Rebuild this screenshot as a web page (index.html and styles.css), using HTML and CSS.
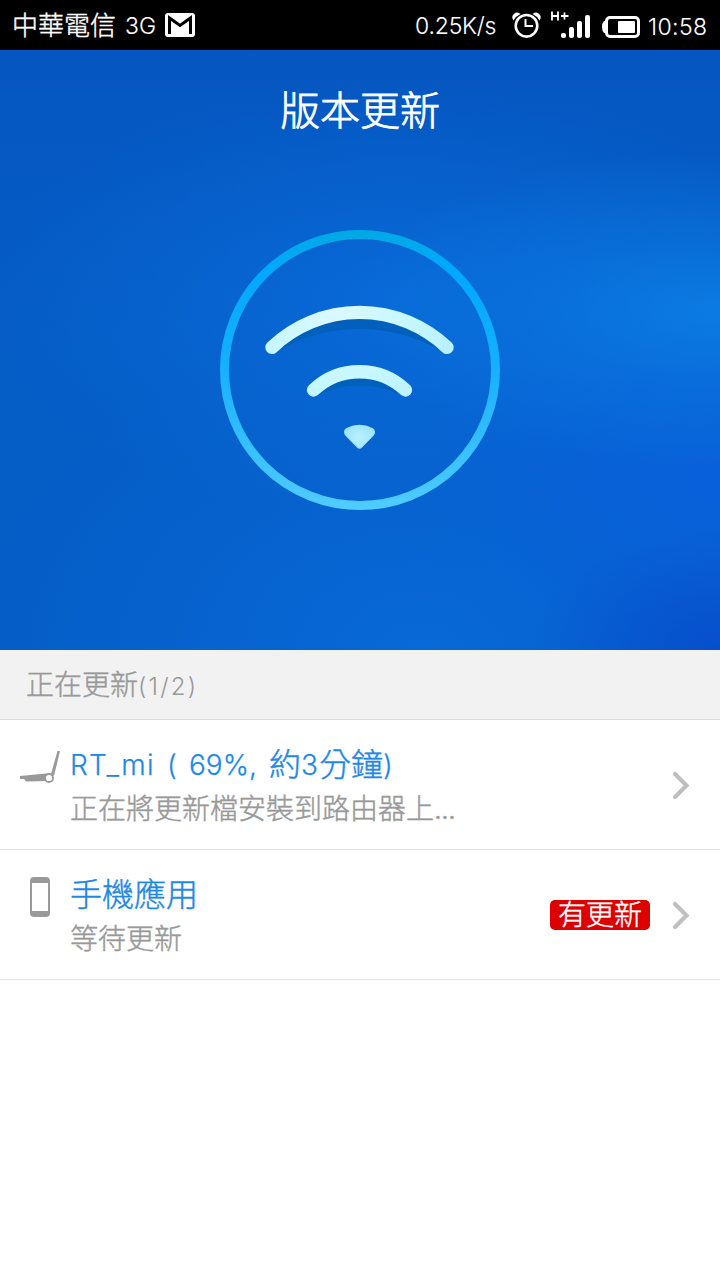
FILE: index.html
```html
<!DOCTYPE html>
<html lang="zh-Hant">
<head>
<meta charset="utf-8">
<title>版本更新</title>
<link rel="stylesheet" href="styles.css">
</head>
<body>
<header class="status">
  <span class="carrier">中華電信</span>
  <span class="network">3G</span>
  <svg class="mail" width="30" height="24" viewBox="0 0 30 24"><rect width="30" height="24" rx="3" fill="#fff"/><path d="M4.500 21V5L15 12.500L25.500 5V21" fill="none" stroke="#000" stroke-width="3"/></svg>
  <span class="speed">0.25K/s</span>
  <svg class="alarm" width="30" height="26" viewBox="0 0 30 26"><g fill="none" stroke="#fff"><circle cx="14.500" cy="13.800" r="10.800" stroke-width="2.600"/><path d="M13.500 7V14H21" stroke-width="2"/></g><path d="M1.500 8.500Q-1 5 1.500 2.500Q4 -1 8.500 2Q4 4 1.500 8.500ZM27.500 8.500Q30 5 27.500 2.500Q25 -1 20.500 2Q25 4 27.500 8.500Z" fill="#fff"/></svg>
  <svg class="signal" width="40" height="30" viewBox="0 0 40 30"><path d="M2 1.500V10.500M8 1.500V10.500M2 6H8M11 6H18.500M14.500 2.500V9.500" fill="none" stroke="#fff" stroke-width="1.800"/><g fill="#fff"><rect x="11" y="23" width="5" height="5" rx="2"/><rect x="19" y="17" width="5" height="11" rx="2"/><rect x="27" y="11" width="5" height="17" rx="2"/><rect x="35" y="5" width="5" height="23" rx="2"/></g></svg>
  <svg class="battery" width="38" height="22" viewBox="0 0 38 22"><rect x="4.5" y="1.5" width="32" height="19" rx="3.5" fill="none" stroke="#fff" stroke-width="3"/><path d="M4 5H2Q0 7 0 11T2 17H4Z" fill="#fff"/><rect x="16" y="5" width="17" height="12" rx="1" fill="#fff"/></svg>
  <span class="clock">10:58</span>
</header>
<section class="hero">
  <h1 class="title">版本更新</h1>
  <svg class="emblem" width="280" height="280" viewBox="220 230 280 280">
    <defs>
      <linearGradient id="ring" x1="0" y1="0" x2="0" y2="1"><stop offset="0" stop-color="#00a9e6"/><stop offset=".13" stop-color="#00a8ff"/><stop offset=".5" stop-color="#17b0ff"/><stop offset="1" stop-color="#4fcbff"/></linearGradient>
      <radialGradient id="ice" gradientUnits="userSpaceOnUse" cx="335" cy="310" r="140"><stop offset="0" stop-color="#dcf9ff"/><stop offset=".55" stop-color="#c5f7ff"/><stop offset="1" stop-color="#b5eeff"/></radialGradient>
      <radialGradient id="tip"><stop offset="0" stop-color="#bcf0ff"/><stop offset="1" stop-color="#9ce5ff"/></radialGradient>
    </defs>
    <circle cx="360" cy="370" r="135.5" fill="none" stroke="url(#ring)" stroke-width="9"/>
    <path d="M276 352A120 120 0 0 1 443 352Q404 329 359.500 329T276 352Z" fill="#0060bc"/>
    <path d="M317 395A60 60 0 0 1 402 395Q382 385.500 359.500 385.500T317 395Z" fill="#0060bc"/>
    <g fill="none" stroke="url(#ice)" stroke-width="13.400" stroke-linecap="round"><path d="M272 347.300A127 127 0 0 1 447 347.300"/><path d="M313.500 390A67 67 0 0 1 405.500 390"/></g>
    <path d="M345.500 435.800Q342 431 346.500 428Q359.500 421.500 372.500 428Q377 431 373.500 435.800L362 447.500Q359.500 450 357 447.500Z" fill="url(#tip)"/>
  </svg>
</section>
<h2 class="group">正在更新<span class="count">(1/2)</span></h2>
<ul class="list">
  <li class="item">
    <svg class="thumb" width="40" height="40" viewBox="0 0 40 40"><path d="M0 26L26 23.500L31 24L30 31L6 31.500L4 29H0ZM31 24L37.500 1H40L34 26Z" fill="#999"/><circle cx="29" cy="28" r="4" fill="#fff" stroke="#999" stroke-width="1.800"/></svg>
    <div class="body"><div class="name"><span class="device">RT_mi</span><span class="open">(</span><span class="percent">69%,</span>約<span class="digit">3</span>分鐘<span class="close">)</span></div><div class="desc">正在將更新檔安裝到路由器上<span class="dots">...</span></div></div>
    <svg class="chevron" width="18" height="30" viewBox="0 0 18 30"><path d="M3 4L14.500 15.500L3 27" fill="none" stroke="#bfbfbf" stroke-width="4.200" stroke-linecap="round"/></svg>
  </li>
  <li class="item">
    <svg class="thumb" width="40" height="40" viewBox="0 0 40 40"><path fill="#999" fill-rule="evenodd" d="M14 0H26Q30 0 30 4V36Q30 40 26 40H14Q10 40 10 36V4Q10 0 14 0ZM12 6V34H28V6Z"/></svg>
    <div class="body"><div class="name">手機應用</div><div class="desc">等待更新</div></div>
    <span class="badge">有更新</span>
    <svg class="chevron" width="18" height="30" viewBox="0 0 18 30"><path d="M3 4L14.500 15.500L3 27" fill="none" stroke="#bfbfbf" stroke-width="4.200" stroke-linecap="round"/></svg>
  </li>
</ul>
</body>
</html>
```
FILE: styles.css
```css
* { box-sizing: border-box; }
body {
  margin: 0;
  min-height: 1280px;
  background: #fff;
  font-family: Inter, "Noto Sans CJK TC", sans-serif;
  font-weight: 300;
  -webkit-text-stroke: .45px currentColor;
}
svg { display: block; flex: none; }
.status {
  height: 50px;
  padding-left: 12px;
  display: flex;
  align-items: center;
  background: #000;
  color: #fff;
  line-height: 50px;
  white-space: nowrap;
}
.carrier { width: 113px; padding-top: 1px; font-size: 26px; }
.network { width: 40px; padding-top: 1px; font-size: 23px; -webkit-text-stroke-width: .1px; }
.speed { width: 97px; margin-left: 220px; padding-top: 2px; font-size: 23px; letter-spacing: -.2px; -webkit-text-stroke-width: .1px; }
.alarm { margin-right: 8px; }
.signal { margin-right: 12px; }
.battery { margin-top: 4px; margin-right: 8px; }
.clock { padding-top: 3px; font-size: 23px; letter-spacing: .4px; -webkit-text-stroke-width: .1px; }
.hero {
  height: 600px;
  padding-top: 31px;
  display: flex;
  flex-direction: column;
  align-items: center;
  gap: 89px;
  background:
    radial-gradient(ellipse 380px 160px at 720px 260px, rgba(12, 130, 232, .8), rgba(12, 125, 230, .4) 50%, rgba(12, 125, 232, 0)),
    radial-gradient(ellipse 190px 120px at 720px 600px, rgba(7, 76, 206, .9), rgba(7, 76, 206, 0)),
    radial-gradient(ellipse 300px 200px at 720px 430px, rgba(10, 98, 228, .7), rgba(10, 98, 224, 0)),
    radial-gradient(ellipse 420px 220px at 400px 250px, rgba(9, 110, 222, .75), rgba(9, 108, 220, .4) 50%, rgba(9, 108, 220, 0)),
    radial-gradient(ellipse 460px 320px at 420px 600px, rgba(8, 108, 220, .8), rgba(8, 104, 216, .45) 50%, rgba(8, 104, 216, 0)),
    linear-gradient(180deg, #0556c0, #055dc6 50%, #055dc6);
}
.title { margin: 0; height: 60px; color: #fff; font-size: 40px; line-height: 60px; font-weight: 300; -webkit-text-stroke-width: .8px; }
.group {
  height: 70px;
  margin: 0;
  padding: 0 0 0 26px;
  background: #f2f2f2;
  border-bottom: 1px solid #dcdcdc;
  color: #999;
  font-size: 28px;
  line-height: 71px;
  font-weight: 300;
}
.count { font-size: 24px; letter-spacing: 2.2px; -webkit-text-stroke-width: 0; }
.list { margin: 0; padding: 0; list-style: none; }
.item {
  height: 130px;
  padding: 0 30px 0 20px;
  display: flex;
  align-items: center;
  border-bottom: 1px solid #e2e2e2;
}
.thumb { align-self: flex-start; margin: 27px 10px 0 0; }
.item:first-child .thumb { margin-top: 30px; }
.body { flex: 1; align-self: flex-start; padding-top: 21px; white-space: nowrap; }
.name { height: 48px; display: flex; color: #1e88e5; font-size: 32px; line-height: 48px; }
.device, .open, .percent, .digit, .close { font-size: 28px; -webkit-text-stroke-width: .25px; }
.device { width: 97px; letter-spacing: 1.3px; }
.open { width: 22px; }
.percent { width: 80px; letter-spacing: 0; }
.digit { width: 18px; }
.desc { height: 40px; color: #999; font-size: 28px; line-height: 40px; }
.dots { letter-spacing: -.9px; }
.badge {
  width: 100px;
  height: 30px;
  margin-right: 22px;
  border-radius: 5px;
  background: #dc0000;
  color: #fff;
  font-size: 28px;
  line-height: 31px;
  text-align: center;
}
```
